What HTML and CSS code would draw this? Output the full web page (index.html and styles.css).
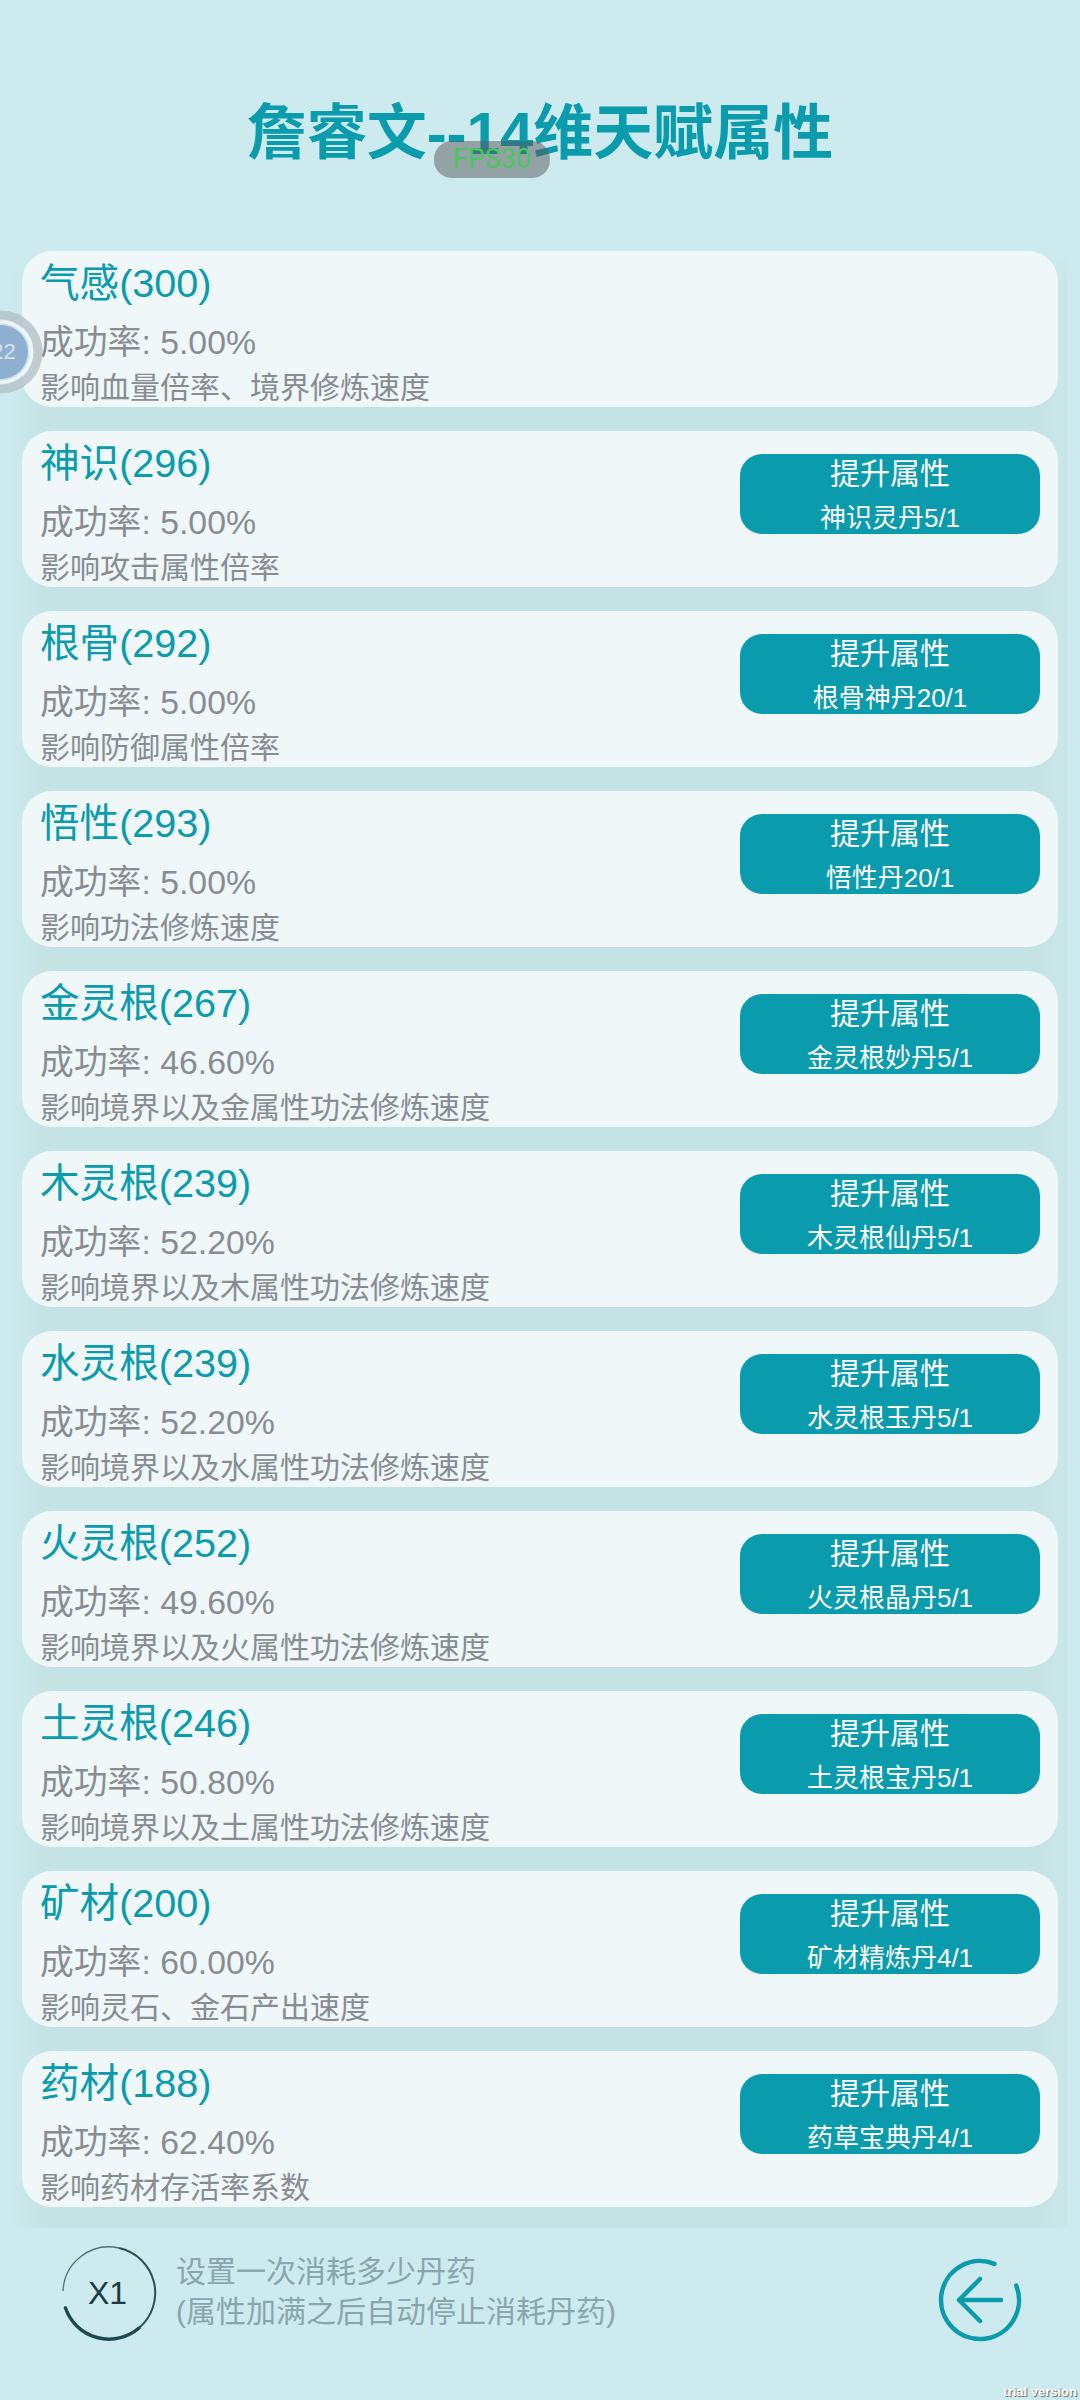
FILE: index.html
```html
<!DOCTYPE html>
<html lang="zh">
<head>
<meta charset="utf-8">
<title>天赋属性</title>
<link rel="stylesheet" href="styles.css">
</head>
<body>
<main class="page">
  <header class="header"><h1 class="title">詹睿文--14维天赋属性</h1></header>
  <section class="list">
    <article class="card"><div class="info"><div class="name">气感(300)</div><div class="rate">成功率: 5.00%</div><div class="desc">影响血量倍率、境界修炼速度</div></div></article>
    <article class="card"><div class="info"><div class="name">神识(296)</div><div class="rate">成功率: 5.00%</div><div class="desc">影响攻击属性倍率</div></div><button class="btn"><span class="btn-top">提升属性</span><span class="btn-sub">神识灵丹5/1</span></button></article>
    <article class="card"><div class="info"><div class="name">根骨(292)</div><div class="rate">成功率: 5.00%</div><div class="desc">影响防御属性倍率</div></div><button class="btn"><span class="btn-top">提升属性</span><span class="btn-sub">根骨神丹20/1</span></button></article>
    <article class="card"><div class="info"><div class="name">悟性(293)</div><div class="rate">成功率: 5.00%</div><div class="desc">影响功法修炼速度</div></div><button class="btn"><span class="btn-top">提升属性</span><span class="btn-sub">悟性丹20/1</span></button></article>
    <article class="card"><div class="info"><div class="name">金灵根(267)</div><div class="rate">成功率: 46.60%</div><div class="desc">影响境界以及金属性功法修炼速度</div></div><button class="btn"><span class="btn-top">提升属性</span><span class="btn-sub">金灵根妙丹5/1</span></button></article>
    <article class="card"><div class="info"><div class="name">木灵根(239)</div><div class="rate">成功率: 52.20%</div><div class="desc">影响境界以及木属性功法修炼速度</div></div><button class="btn"><span class="btn-top">提升属性</span><span class="btn-sub">木灵根仙丹5/1</span></button></article>
    <article class="card"><div class="info"><div class="name">水灵根(239)</div><div class="rate">成功率: 52.20%</div><div class="desc">影响境界以及水属性功法修炼速度</div></div><button class="btn"><span class="btn-top">提升属性</span><span class="btn-sub">水灵根玉丹5/1</span></button></article>
    <article class="card"><div class="info"><div class="name">火灵根(252)</div><div class="rate">成功率: 49.60%</div><div class="desc">影响境界以及火属性功法修炼速度</div></div><button class="btn"><span class="btn-top">提升属性</span><span class="btn-sub">火灵根晶丹5/1</span></button></article>
    <article class="card"><div class="info"><div class="name">土灵根(246)</div><div class="rate">成功率: 50.80%</div><div class="desc">影响境界以及土属性功法修炼速度</div></div><button class="btn"><span class="btn-top">提升属性</span><span class="btn-sub">土灵根宝丹5/1</span></button></article>
    <article class="card"><div class="info"><div class="name">矿材(200)</div><div class="rate">成功率: 60.00%</div><div class="desc">影响灵石、金石产出速度</div></div><button class="btn"><span class="btn-top">提升属性</span><span class="btn-sub">矿材精炼丹4/1</span></button></article>
    <article class="card"><div class="info"><div class="name">药材(188)</div><div class="rate">成功率: 62.40%</div><div class="desc">影响药材存活率系数</div></div><button class="btn"><span class="btn-top">提升属性</span><span class="btn-sub">药草宝典丹4/1</span></button></article>
  </section>
  <footer class="footer">
    <div class="multi">
      <svg class="multi-ring" viewBox="0 0 96 96" aria-hidden="true">
        <path d="M4.5 63A46 46 0 0 0 78 83" fill="none" stroke="#1f4a50" stroke-width="3.5" stroke-linecap="round"/>
        <path d="M78 83A46 46 0 0 0 58 3" fill="none" stroke="#2a4f58" stroke-width="2"/>
        <path d="M58 3A46 46 0 0 0 2 46" fill="none" stroke="#4d7078" stroke-width="1.3"/>
      </svg>
      <span class="multi-label">X1</span>
    </div>
    <div class="hint"><div>设置一次消耗多少丹药</div><div>(属性加满之后自动停止消耗丹药)</div></div>
    <svg class="back" viewBox="0 0 90 90" aria-hidden="true">
      <path d="M59.5 8.8A39 39 0 1 0 81.2 30.5" fill="none" stroke="#0a9bac" stroke-width="4.5" stroke-linecap="round"/>
      <path d="M66 45H24M45 24L24 45L45 66" fill="none" stroke="#0a9bac" stroke-width="4.5" stroke-linecap="round" stroke-linejoin="round"/>
    </svg>
  </footer>
</main>
<div class="fps">FPS30</div>
<div class="ball">
  <svg class="ball-svg" viewBox="0 0 84 84" aria-hidden="true">
    <circle cx="42" cy="42" r="37" fill="none" stroke="#b4c0c6" stroke-opacity=".8" stroke-width="9"/>
    <circle cx="42" cy="42" r="31" fill="#cfe2ea"/>
    <circle cx="42" cy="42" r="27" fill="#8fb0d0"/>
    <circle cx="42" cy="42" r="30" fill="none" stroke="#eef6f9" stroke-width="3" stroke-dasharray="70 10 50 10"/>
  </svg>
  <span class="ball-text">22</span>
</div>
<div class="trial">trial version</div>
</body>
</html>
```
FILE: styles.css
```css
* { box-sizing: border-box; }
html, body { margin: 0; padding: 0; }
body {
  width: 1080px;
  height: 2400px;
  overflow: hidden;
  background: #cdebee;
  font-family: "Liberation Sans", "Noto Sans CJK SC", sans-serif;
}
.page { display: flex; flex-direction: column; height: 2400px; }
.header { height: 251px; padding-top: 94px; }
.title {
  margin: 0;
  height: 80px;
  line-height: 80px;
  text-align: center;
  font-size: 60px;
  font-weight: 700;
  color: #0a9bac;
}
.list {
  display: flex;
  flex-direction: column;
  gap: 24px;
  padding: 0 22px 21px;
  background:
    linear-gradient(180deg, #cdebee, rgba(205, 235, 238, 0) 30px),
    linear-gradient(90deg, #cdebee 10px, #c5e2e5 44px, #c5e2e5 1040px, #c9e6e9 1058px, #c9e6e9 1067px, #cdebee 1068px);
}
.card {
  display: flex;
  justify-content: space-between;
  align-items: flex-start;
  height: 156px;
  padding: 0 18px 0 19px;
  border-radius: 30px;
  background: #eff7f9;
}
.info { display: flex; flex-direction: column; margin-left: -1px; }
.name { height: 60px; line-height: 64px; font-size: 39.6px; color: #0a9bac; }
.rate { height: 56px; line-height: 62px; font-size: 33.8px; color: #878d92; }
.desc { height: 40px; line-height: 42px; font-size: 30px; color: #878d92; }
.btn {
  display: flex;
  flex-direction: column;
  align-items: center;
  width: 300px;
  height: 80px;
  margin-top: 23px;
  padding: 0;
  border: 0;
  border-radius: 22px;
  background: #0a9bac;
  color: #fff;
  font-family: inherit;
}
.btn-top { height: 40px; line-height: 40px; font-size: 30px; }
.btn-sub { height: 40px; padding-top: 6px; line-height: 36px; font-size: 26px; }
.footer { position: relative; display: flex; align-items: flex-start; padding: 17px 0 0 61px; }
.multi { position: relative; width: 96px; height: 96px; }
.multi-ring { display: block; width: 96px; height: 96px; }
.multi-label {
  position: absolute;
  inset: 0;
  display: flex;
  align-items: center;
  justify-content: center;
  padding-right: 3px;
  font-size: 32px;
  color: #1d3a44;
}
.hint { margin: 7px 0 0 19px; font-size: 30px; line-height: 40px; color: #8aa5ad; }
.back { width: 90px; height: 90px; margin: 10px 55px 0 auto; }
.fps {
  position: absolute;
  left: 434px;
  top: 141px;
  width: 116px;
  height: 37px;
  border-radius: 18px;
  background: rgba(90, 90, 90, .5);
  color: #4cc65e;
  font-family: "Roboto", sans-serif;
  font-size: 27px;
  line-height: 37px;
  text-align: center;
}
.ball { position: absolute; left: -41px; top: 310px; width: 84px; height: 84px; }
.ball-svg { display: block; width: 84px; height: 84px; }
.ball-text {
  position: absolute;
  inset: 0;
  display: flex;
  align-items: center;
  justify-content: center;
  padding-left: 5px;
  font-size: 22px;
  color: #d7e2ea;
}
.trial {
  position: absolute;
  right: 3px;
  bottom: 0;
  font-size: 13px;
  font-weight: 700;
  line-height: 16px;
  color: #fff;
  text-shadow: 1px 1px 1px #666;
}
```
